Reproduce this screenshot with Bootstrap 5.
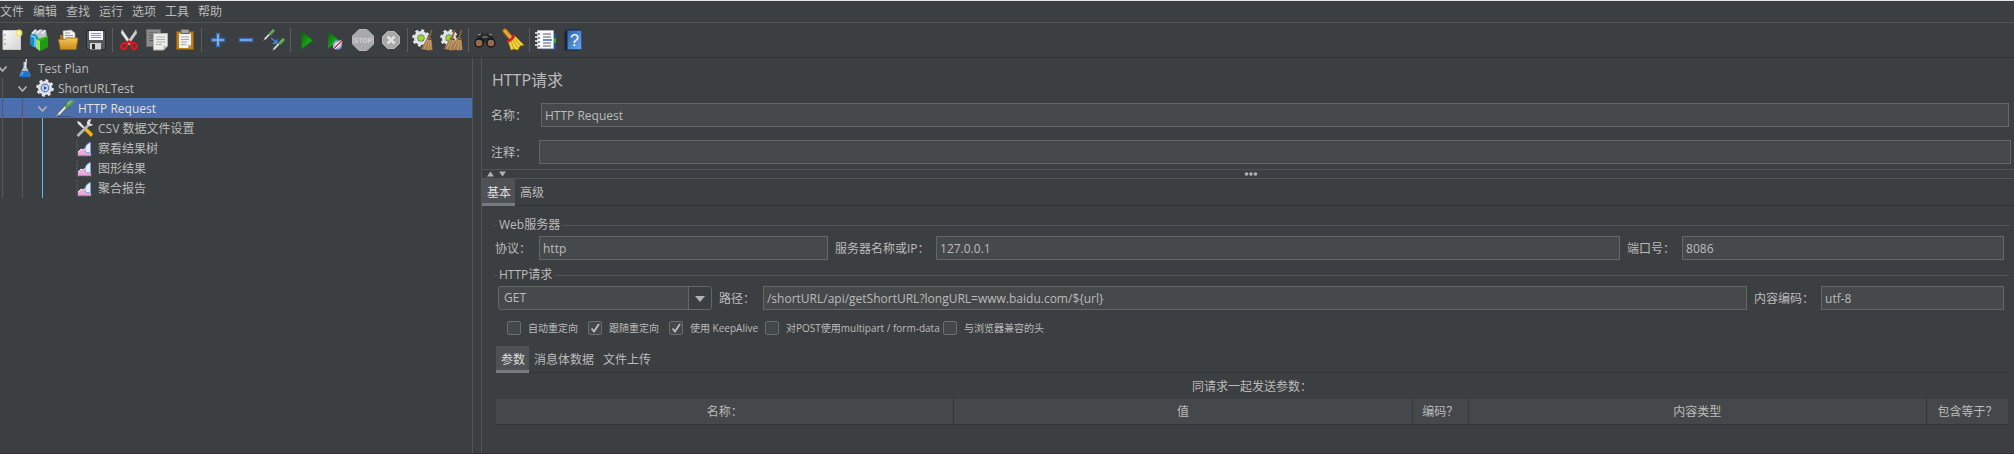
<!DOCTYPE html>
<html lang="zh-CN">
<head>
<meta charset="utf-8">
<meta name="viewport" content="width=device-width, initial-scale=1">
<title>HTTP Request</title>
<link rel="stylesheet" href="https://cdn.jsdelivr.net/npm/bootstrap@5.3.0/dist/css/bootstrap.min.css">
<style>
:root{--bg:#3c3f41;--field:#45494a;--edge:#646667;--rule:#515455;--dark:#323537;--fg:#bbbbbb}
body{background:var(--bg);color:var(--fg);font:12px/18px "Open Sans","Noto Sans CJK SC",sans-serif}
.app{border-top:1px solid #e8e8e8;border-bottom:1px solid #3a3033}
.menubar{height:22px;border-bottom:1px solid var(--rule);gap:9px}
.menubar a{color:var(--fg);line-height:21px}
.toolbar{height:35px;gap:4px;border-bottom:1px solid var(--dark)}
.toolbar button,.collapser button{background:none;border:0;padding:0;line-height:0}
.tool-icon{width:24px;height:24px}
.sep{width:1px;height:24px;background:#5a5d5e}
.tree{width:472px}
.tree-row{height:20px;line-height:22px}
.tree-row.selected{background:#4b6eaf;color:#e0e0e0}
.guide{width:20px;background:linear-gradient(#565a5c,#565a5c) 2px 0/1px 100% no-repeat}
.guide.current{background-image:linear-gradient(#6cb4ee,#6cb4ee)}
.twisty{width:16px;height:20px;overflow:visible}
.node-icon{width:18px;height:20px;margin-right:4px}
.divider{width:10px;border-left:1px solid var(--rule);border-right:1px solid var(--rule)}
h1{font-size:16px;line-height:45px;margin:0;padding-left:10px}
.fld{height:24px;min-width:0;padding:0 3px;border:1px solid var(--edge);border-radius:0;background-color:var(--field);color:var(--fg);font-size:12px;line-height:22px}
.fld:focus{background-color:var(--field);color:var(--fg);box-shadow:none;border-color:#4b6eaf}
select.fld{border-radius:3px;padding-left:5px;background-image:url("data:image/svg+xml,%3Csvg xmlns='http://www.w3.org/2000/svg' width='23' height='22'%3E%3Cpath d='M0 0h23v22H0z' fill='%233c3f41'/%3E%3Cpath d='M0 0h1v22H0z' fill='%23646667'/%3E%3Cpath d='M7 9h10l-5 6z' fill='%23afb1b3'/%3E%3C/svg%3E");background-position:right center;background-size:23px 22px}
.name-row{padding:0 5px 0 9px}
.note-row{padding:0 3px 0 9px;margin:13px 0 5px}
.row-label{height:24px;line-height:26px;flex:none}
.w-head{width:50px}.w-note{width:48px}.w-proto{width:44px}.w-host{width:101px}.w-port{width:55px}.w-path{width:44px}.w-enc{width:67px}
.g-proto{flex:289 289 289px}.g-host{flex:684 684 684px}.g-port{flex:322 322 322px}
.g-method{flex:214 214 214px}.g-path{flex:985 985 985px}.g-enc{flex:183 183 183px}
.collapser{height:10px;border-top:1px solid var(--rule);border-bottom:1px solid var(--rule);padding-left:5px}
.grip{padding-left:6px;pointer-events:none}
.tabstrip{box-shadow:inset 0 -1px var(--dark)}
.tabstrip button{background:none;border:0;color:var(--fg);height:27px;padding:0 4px 0 5px;line-height:27px}
.tabstrip button.active{background:#4e5254;color:#dddddd;box-shadow:inset 0 -3px #747a80}
.group{padding:0 5px 0 12px}
.group legend{float:none;font-size:12px;line-height:18px;margin:0 0 2px;gap:2px}
.group legend::before,.group legend::after{content:"";height:1px;background:var(--rule);width:3px}
.group legend::after{flex:1}
.server{margin-top:10px}
.request{margin-top:6px}
.server .group-row{padding:0 5px 0 1px}
.request .group-row{padding:0 5px 0 4px}
.group-row .fld + .row-label{margin-left:7px}
.checks{display:grid;grid-template-columns:81px 81px 96px 178px auto;padding-left:13px;margin-top:11px;font-size:10px;line-height:14px}
.checks label{gap:7px;white-space:nowrap}
.checks .form-check-input{width:14px;height:14px;margin:0;border:1px solid #6b6d6e;border-radius:2px;background-color:#43494a;flex:none}
.checks .form-check-input:checked{background-color:#43494a;background-size:12px;background-image:url("data:image/svg+xml,%3Csvg xmlns='http://www.w3.org/2000/svg' viewBox='0 0 12 12'%3E%3Cpath d='M2.5 6.5l2.5 3 5-7.500' fill='none' stroke='%23bbb' stroke-width='1.900'/%3E%3C/svg%3E")}
.params{padding:0 6px 0 14px;margin-top:11px}
.params-title{height:26px;line-height:28px}
.args{table-layout:fixed;border-collapse:separate;border-spacing:0;color:var(--fg)}
.args th{height:26px;line-height:25px;padding:0;font-weight:400;text-align:center;background:#45484a;border-bottom:1px solid var(--dark);border-right:1px solid var(--dark)}
.args th:last-child{border-right:0}
.c-enc{width:56px}.c-inc{width:81px}
</style>
</head>
<body>
<svg width="0" height="0" class="position-absolute" aria-hidden="true">
<defs>
<linearGradient id="gGreen" x2="1" y2="1"><stop stop-color="#0a5c0a"/><stop offset=".6" stop-color="#19a519"/><stop offset="1" stop-color="#0c7a0c"/></linearGradient>
<linearGradient id="gFold" x2="0" y2="1"><stop stop-color="#f6c65c"/><stop offset="1" stop-color="#c88a16"/></linearGradient>
<linearGradient id="gBlue" x2="1" y2="1"><stop stop-color="#2c62ae"/><stop offset="1" stop-color="#6aa8f0"/></linearGradient>
<linearGradient id="gPaper" x2="1" y2="1"><stop stop-color="#fafafa"/><stop offset="1" stop-color="#d4d4d4"/></linearGradient>
<symbol id="dropper" viewBox="0 0 18 18"><path d="M.8 17.200L3 14.500" stroke="#c8cac8" stroke-width="1"/><path d="M2.500 15.500L10.500 7" stroke="#58605a" stroke-width="3.600"/><path d="M2.500 15.500L10.500 7" stroke="#dfe6df" stroke-width="2.200"/><path d="M9 5l4 4" stroke="#2e5b28" stroke-width="1.800"/><path d="M11 7l4.500-4.500" stroke="#5d9c4c" stroke-width="4.400" stroke-linecap="round"/><path d="M11.500 5.500l3.500-3.300" stroke="#9aca88" stroke-width="1.300"/></symbol>
<symbol id="cog" viewBox="0 0 18 18"><circle cx="9" cy="9" r="7.500" fill="none" stroke="#e4e6ea" stroke-width="2.600" stroke-dasharray="2.950 2.940"/><circle cx="9" cy="9" r="5.300" fill="none" stroke="#dfe2e8" stroke-width="3.600"/></symbol>
<symbol id="besom" viewBox="0 0 12 22"><path d="M10.500 1L8 10" stroke="#8c6135" stroke-width="1.800"/><path d="M6.500 8l4 1.500 1 11.500-4 .5-7.500-1.500z" fill="#a37b4c"/><path d="M7 10L3 20M8.300 10L6.500 21M9.500 10.500l.5 10" stroke="#d1ad7c" stroke-width=".8"/><path d="M6.200 9.500l4.500 1.300" stroke="#674421" stroke-width="1.200"/></symbol>
<symbol id="graph" viewBox="0 0 18 20"><path d="M1 2v16h15" fill="none" stroke="#6e7275" stroke-width="1" stroke-dasharray="1 1"/><path d="M2 17v-3l3-3 2 1 2-2 6 3v4z" fill="#efa9dc"/><path d="M2 14l3-3 2 1 2-2" fill="none" stroke="#fbe0f5" stroke-width="1"/><path d="M9 13C9 8 11 5.500 14.500 4.500V15l-4-.5z" fill="#e4eefc" stroke="#6f9bdc" stroke-width=".9"/><path d="M2 17h13" stroke="#e49bd2" stroke-width="1.500"/></symbol>
</defs>
</svg>
<div class="app d-flex flex-column min-vh-100">
<nav class="menubar d-flex overflow-hidden" aria-label="菜单">
<a href="#" class="text-decoration-none">文件</a><a href="#" class="text-decoration-none">编辑</a><a href="#" class="text-decoration-none">查找</a><a href="#" class="text-decoration-none">运行</a><a href="#" class="text-decoration-none">选项</a><a href="#" class="text-decoration-none">工具</a><a href="#" class="text-decoration-none">帮助</a>
</nav>
<div class="toolbar d-flex align-items-center" role="toolbar">
<button type="button" aria-label="新建"><svg class="tool-icon" viewBox="0 0 24 24"><path d="M3 2.500h17.500V21.500H3z" fill="url(#gPaper)" stroke="#c9cac6"/><path d="M5 6v2M5 11v1M5 15v2" stroke="#888"/><circle cx="19" cy="5" r="3.500" fill="#f4e65a" opacity=".85"/><circle cx="19" cy="5" r="1.600" fill="#fffde0"/></svg></button>
<button type="button" aria-label="模板"><svg class="tool-icon" viewBox="0 0 24 24"><path d="M3 6l4-5 3 2 3-2 3 2 2-1 1 8-12 4z" fill="#b9c6cc"/><path d="M4 5l4-3M9 5l3-3M14 6l3-4" stroke="#f2f6f8" stroke-width="1.500"/><path d="M2 7l5-1 3 3v11l-5-1-3-3z" fill="#1c8cc8"/><path d="M3 8l4 1v10" fill="none" stroke="#7fd0f2" stroke-width="1.400"/><path d="M8 11l5-1 7-2v11l-8 4-4-3z" fill="#35b71e"/><path d="M8 11l4 2v10l-4-3z" fill="#8be56a"/><path d="M12 13l8-4v10l-8 4z" fill="#1f9a12"/></svg></button>
<button type="button" aria-label="打开"><svg class="tool-icon" viewBox="0 0 24 24"><path d="M4 7h5l1 2h10v12H4z" fill="#a9720f"/><path d="M7 3l8-1 4 3v12H8z" fill="#f3f3f3" stroke="#aaa" stroke-width=".6"/><path d="M9 5h5M9 7.500h8M9 10h8" stroke="#9a9a9a"/><path d="M2.500 11.500H9l2-1.500h11l-2 11.500H4.500z" fill="url(#gFold)" stroke="#a9730f" stroke-width=".8"/></svg></button>
<button type="button" aria-label="保存"><svg class="tool-icon" viewBox="0 0 24 24"><path d="M2.500 2.500h19v19h-17l-2-2z" fill="#555a61" stroke="#25282c"/><path d="M5 3h14v9H5z" fill="#f5f8fc"/><path d="M7 5.500h10M7 7.500h10M7 9.500h10" stroke="#7c9dcb"/><path d="M6 15h11v6.500H6z" fill="#d3d4d2"/><path d="M8 16h3v5H8z" fill="#25282c"/></svg></button>
<span class="sep"></span>
<button type="button" aria-label="剪切"><svg class="tool-icon" viewBox="0 0 24 24"><path d="M5 1.500L14.500 15l-2 2L4 5z" fill="#e9e9e7" stroke="#999" stroke-width=".5"/><path d="M19 1.500L9.500 15l2 2L20 5z" fill="#cfd0ce" stroke="#8d8d8d" stroke-width=".5"/><g fill="none" stroke="#d8191d" stroke-width="2.500"><ellipse cx="7" cy="18" rx="2.600" ry="3" transform="rotate(35 7 18)"/><ellipse cx="17" cy="18" rx="2.600" ry="3" transform="rotate(-35 17 18)"/><path d="M9 15.500l3-2 3 2"/></g></svg></button>
<button type="button" aria-label="复制"><svg class="tool-icon" viewBox="0 0 24 24"><path d="M1.500 1.500h14v17h-14z" fill="#8a8b89" stroke="#6c6d6b"/><path d="M4 5h9M4 7.500h9M4 10h4M4 12.500h4" stroke="#5f605e"/><path d="M8.500 5.500h14V18l-4 4h-10z" fill="#ececea" stroke="#b2b2af"/><path d="M11 9h9M11 11.500h9M11 14h9M11 16.500h6" stroke="#b0b0ae"/><path d="M22.500 18h-4v4z" fill="#bbb"/></svg></button>
<button type="button" aria-label="粘贴"><svg class="tool-icon" viewBox="0 0 24 24"><path d="M3.500 3.500h17v18h-17z" fill="#c17f1c" stroke="#8a5a0b"/><path d="M6 5.500h12V17l-3 3H6z" fill="#f0f0ee"/><path d="M8 1.500h8v4H8z" fill="#a5a7a3" stroke="#62645f"/><path d="M8 9h8M8 11.500h8M8 14h6M8 16.500h5" stroke="#aaa"/><path d="M18 17h-3v3z" fill="#aaa"/></svg></button>
<span class="sep"></span>
<button type="button" aria-label="全部展开"><svg class="tool-icon" viewBox="0 0 24 24"><path d="M10.500 5.500h3v5h5v3h-5v5h-3v-5h-5v-3h5z" fill="#8bb8ee" stroke="#3568b0" stroke-width="1.300"/></svg></button>
<button type="button" aria-label="全部折叠"><svg class="tool-icon" viewBox="0 0 24 24"><path d="M5.500 10.500h13v3h-13z" fill="#8bb8ee" stroke="#3568b0" stroke-width="1.300"/></svg></button>
<button type="button" aria-label="切换状态"><svg class="tool-icon" viewBox="0 0 24 24"><use href="#dropper" x="1" y="1" width="12" height="12"/><use href="#dropper" x="10" y="10" width="13" height="13"/><path d="M9 10l5 4" stroke="#3d7fe6" stroke-width="1.600"/><path d="M15.500 10.500V16H10z" fill="#3d7fe6"/></svg></button>
<span class="sep"></span>
<button type="button" aria-label="启动"><svg class="tool-icon" viewBox="0 0 24 24"><path d="M6.500 3.500L18 12.500 6.500 21z" fill="url(#gGreen)" stroke="#0b6e0b" stroke-width=".7"/></svg></button>
<button type="button" aria-label="不停顿开始"><svg class="tool-icon" viewBox="0 0 24 24"><path d="M5 3.500L16 12.500 5 20.500z" fill="url(#gGreen)"/><circle cx="14.500" cy="17" r="4.700" fill="#7ea6d4"/><circle cx="14.500" cy="17" r="3" fill="#c4d5e8"/><path d="M11 20.500l7.500-7.500" stroke="#fff" stroke-width="3"/><path d="M11 20.500l7.500-7.500" stroke="#d92222" stroke-width="1.500"/></svg></button>
<button type="button" aria-label="停止"><svg class="tool-icon" viewBox="0 0 24 24"><path d="M8 1.500h8L22.500 8v8L16 22.500H8L1.500 16V8z" fill="#a9a9a9" stroke="#b8b8b8"/><text x="12" y="15" text-anchor="middle" font-family="Liberation Sans,sans-serif" font-size="7" font-weight="700" fill="#d2d2d2">STOP</text></svg></button>
<button type="button" aria-label="关闭"><svg class="tool-icon" viewBox="0 0 24 24"><path d="M8.500 3.500h7l5 5v7l-5 5h-7l-5-5v-7z" fill="#a8a8a8" stroke="#b7b7b7"/><path d="M8.500 8.500l7 7M15.500 8.500l-7 7" stroke="#e0e0e0" stroke-width="2.600"/></svg></button>
<span class="sep"></span>
<button type="button" aria-label="清除"><svg class="tool-icon" viewBox="0 0 24 24"><use href="#cog" y="1" width="18" height="18"/><circle cx="9" cy="10" r="3" fill="#9ed62e"/><use href="#besom" x="9" y="1" width="12" height="22"/></svg></button>
<button type="button" aria-label="清除全部"><svg class="tool-icon" viewBox="0 0 24 24"><use href="#cog" y="1" width="18" height="18"/><circle cx="9" cy="10" r="3" fill="#9ed62e"/><use href="#besom" x="4" y="1" width="12" height="22"/><use href="#besom" x="11" y="1" width="12" height="22"/></svg></button>
<span class="sep"></span>
<button type="button" aria-label="查找"><svg class="tool-icon" viewBox="0 0 24 24"><path d="M2 13l4-8h4l2 2 2-2h4l4 8v5h-7l-3-5-3 5H2z" fill="#292929"/><path d="M5 7l3-1M16 6l3 1M9.500 9h5" stroke="#a2a2a2" stroke-width="1.200"/><circle cx="6" cy="15" r="4" fill="#777" stroke="#191919" stroke-width="1.500"/><circle cx="18" cy="15" r="4" fill="#777" stroke="#191919" stroke-width="1.500"/><circle cx="6" cy="15.500" r="2.400" fill="#b36033"/><circle cx="18" cy="15.500" r="2.400" fill="#b36033"/></svg></button>
<button type="button" aria-label="重置搜索"><svg class="tool-icon" viewBox="0 0 24 24"><path d="M4 3l6 7" stroke="#a76a16" stroke-width="5" stroke-linecap="round"/><path d="M4 3l6 7" stroke="#e9a63a" stroke-width="3" stroke-linecap="round"/><path d="M7 13l7-5 9 9-4 1-2 4-4-1-3 1z" fill="#f3d33b" stroke="#a88009" stroke-width=".6"/><path d="M10 13l3 8M12 12l5 8M14 11l6 7" stroke="#b6930f" stroke-width=".8"/><path d="M6 13.500Q11 12.500 13.500 7" fill="none" stroke="#d22020" stroke-width="2.600"/></svg></button>
<span class="sep"></span>
<button type="button" aria-label="函数助手对话框"><svg class="tool-icon" viewBox="0 0 24 24"><path d="M8 5h14v17H8z" fill="#1e4ea8"/><path d="M19 10h3v5h-3z" fill="#33a53a"/><path d="M3.500 2.500h16v18h-16z" fill="#fbfbfb" stroke="#b9bcc2" stroke-width=".7"/><path d="M9 6h8M9 9h8M9 15h8M9 18h8" stroke="#555b69"/><path d="M9 12h9" stroke="#2f65c8" stroke-width="1.500"/><path d="M1 5h5M1 9h5M1 13h5M1 17h5" stroke="#f5f5f5" stroke-width="1.700"/><path d="M4 6h2M4 10h2M4 14h2M4 18h2" stroke="#222" stroke-width="1"/></svg></button>
<button type="button" aria-label="帮助"><svg class="tool-icon" viewBox="0 0 24 24"><path d="M2.500 3.500L5 1.500h14.500v19l-2 2h-15z" fill="#182537"/><path d="M5.500 2.500h14v19h-14z" fill="url(#gBlue)" stroke="#264f87" stroke-width=".7"/><text x="12.500" y="18" text-anchor="middle" font-family="Liberation Sans,sans-serif" font-size="16" fill="#fff">?</text></svg></button>
</div>
<div class="d-flex flex-grow-1">
<aside class="tree flex-shrink-0 overflow-hidden" role="tree" aria-label="测试计划">
<div class="tree-row d-flex" role="treeitem"><svg class="twisty" viewBox="0 0 16 20"><path d="M-1.500 8.500l4 4.500 4-4.500" fill="none" stroke="#afb1b3" stroke-width="1.800"/></svg><svg class="node-icon" viewBox="0 0 18 20"><path d="M7.500 4h3v5l4 8q0 2-2 2h-7q-2 0-2-2l4-8z" fill="#cfdbe8" opacity=".85"/><path d="M5.500 13h7l2 4.500q-.5 1.500-2 1.500h-7q-1.500 0-2-1.500z" fill="#1e74d0"/><path d="M10.500 1L9 10" stroke="#f1f1f1" stroke-width="1.200"/><path d="M7 14l-1.500 3" stroke="#9ccbf6"/></svg>Test Plan</div>
<div class="tree-row d-flex" role="treeitem"><span class="guide"></span><svg class="twisty" viewBox="0 0 16 20"><path d="M-1.500 8.500l4 4.500 4-4.500" fill="none" stroke="#afb1b3" stroke-width="1.800"/></svg><svg class="node-icon" viewBox="0 0 18 20"><use href="#cog" y="1" width="18" height="18"/><circle cx="9" cy="10" r="3.800" fill="#c9d8ef" stroke="#5f7fb2" stroke-width="1.200"/><path d="M7.800 7.800l3.500 2.200-3.500 2.200z" fill="#2e63b5"/></svg>ShortURLTest</div>
<div class="tree-row selected d-flex" role="treeitem" aria-selected="true"><span class="guide"></span><span class="guide"></span><svg class="twisty" viewBox="0 0 16 20"><path d="M-1.500 8.500l4 4.500 4-4.500" fill="none" stroke="#afb1b3" stroke-width="1.800"/></svg><svg class="node-icon" viewBox="0 0 18 20"><path d="M1 18.500h14" stroke="#34548e"/><use href="#dropper" y="1" width="18" height="18"/></svg>HTTP Request</div>
<div class="tree-row d-flex" role="treeitem"><span class="guide"></span><span class="guide"></span><span class="guide current"></span><span class="twisty"></span><svg class="node-icon" viewBox="0 0 18 20"><path d="M1 3l3 1 6 7-1 1-7-6z" fill="#e4e4e2"/><path d="M9 10.500l7 7" stroke="#b67a06" stroke-width="4"/><path d="M9 10.500l7 7" stroke="#f7b718" stroke-width="2.600"/><path d="M1.500 18L13 6.500" stroke="#b6b8b4" stroke-width="2.600"/><path d="M15.500 1.500a3.300 3.300 0 1 0 1.500 5l-2.500-.5-.5-2z" fill="#dededc"/></svg>CSV 数据文件设置</div>
<div class="tree-row d-flex" role="treeitem"><span class="guide"></span><span class="guide"></span><span class="guide current"></span><span class="twisty"></span><svg class="node-icon" viewBox="0 0 18 20"><use href="#graph" width="18" height="20"/></svg>察看结果树</div>
<div class="tree-row d-flex" role="treeitem"><span class="guide"></span><span class="guide"></span><span class="guide current"></span><span class="twisty"></span><svg class="node-icon" viewBox="0 0 18 20"><use href="#graph" width="18" height="20"/></svg>图形结果</div>
<div class="tree-row d-flex" role="treeitem"><span class="guide"></span><span class="guide"></span><span class="guide current"></span><span class="twisty"></span><svg class="node-icon" viewBox="0 0 18 20"><use href="#graph" width="18" height="20"/></svg>聚合报告</div>
</aside>
<div class="divider flex-shrink-0"></div>
<main class="flex-grow-1 overflow-hidden">
<h1 class="fw-normal">HTTP请求</h1>
<div class="name-row d-flex">
<label class="row-label w-head" for="name">名称：</label><input class="fld form-control" id="name" value="HTTP Request">
</div>
<div class="note-row d-flex">
<label class="row-label w-note" for="note">注释：</label><input class="fld form-control" id="note">
</div>
<div class="collapser d-flex align-items-center position-relative">
<button type="button" aria-label="收起"><svg width="12" height="8"><path d="M0 6.500l3.500-5 3.500 5z" fill="#afb1b3"/></svg></button><button type="button" aria-label="展开"><svg width="12" height="8"><path d="M0 1.500l3.500 5 3.500-5z" fill="#afb1b3"/></svg></button>
<span class="grip position-absolute start-0 w-100 d-flex justify-content-center"><svg width="14" height="4"><g fill="#afb1b3"><circle cx="2.500" cy="2" r="1.800"/><circle cx="7" cy="2" r="1.800"/><circle cx="11.500" cy="2" r="1.800"/></g></svg></span>
</div>
<div class="tabstrip d-flex" role="tablist"><button type="button" class="active" role="tab" aria-selected="true">基本</button><button type="button" role="tab">高级</button></div>
<fieldset class="group server">
<legend class="d-flex align-items-center"><span>Web服务器</span></legend>
<div class="group-row d-flex">
<label class="row-label w-proto" for="proto">协议：</label><input class="fld form-control g-proto" id="proto" value="http">
<label class="row-label w-host" for="host">服务器名称或IP：</label><input class="fld form-control g-host" id="host" value="127.0.0.1">
<label class="row-label w-port" for="port">端口号：</label><input class="fld form-control g-port" id="port" value="8086">
</div>
</fieldset>
<fieldset class="group request">
<legend class="d-flex align-items-center"><span>HTTP请求</span></legend>
<div class="group-row d-flex">
<select class="fld form-select g-method" aria-label="方法"><option>GET</option><option>POST</option></select>
<label class="row-label w-path" for="path">路径：</label><input class="fld form-control g-path" id="path" value="/shortURL/api/getShortURL?longURL=www.baidu.com/${url}">
<label class="row-label w-enc" for="enc">内容编码：</label><input class="fld form-control g-enc" id="enc" value="utf-8">
</div>
<div class="checks">
<label class="d-flex"><input type="checkbox" class="form-check-input"><span>自动重定向</span></label>
<label class="d-flex"><input type="checkbox" class="form-check-input" checked><span>跟随重定向</span></label>
<label class="d-flex"><input type="checkbox" class="form-check-input" checked><span>使用 KeepAlive</span></label>
<label class="d-flex"><input type="checkbox" class="form-check-input"><span>对POST使用multipart / form-data</span></label>
<label class="d-flex"><input type="checkbox" class="form-check-input"><span>与浏览器兼容的头</span></label>
</div>
</fieldset>
<section class="params">
<div class="tabstrip d-flex" role="tablist"><button type="button" class="active" role="tab" aria-selected="true">参数</button><button type="button" role="tab">消息体数据</button><button type="button" role="tab">文件上传</button></div>
<div class="params-title text-center">同请求一起发送参数：</div>
<table class="args w-100"><colgroup><col><col><col class="c-enc"><col><col class="c-inc"></colgroup>
<thead><tr><th>名称：</th><th>值</th><th>编码？</th><th>内容类型</th><th>包含等于？</th></tr></thead></table>
</section>
</main>
</div>
</div>
<script src="https://cdn.jsdelivr.net/npm/bootstrap@5.3.0/dist/js/bootstrap.bundle.min.js"></script>
</body>
</html>
